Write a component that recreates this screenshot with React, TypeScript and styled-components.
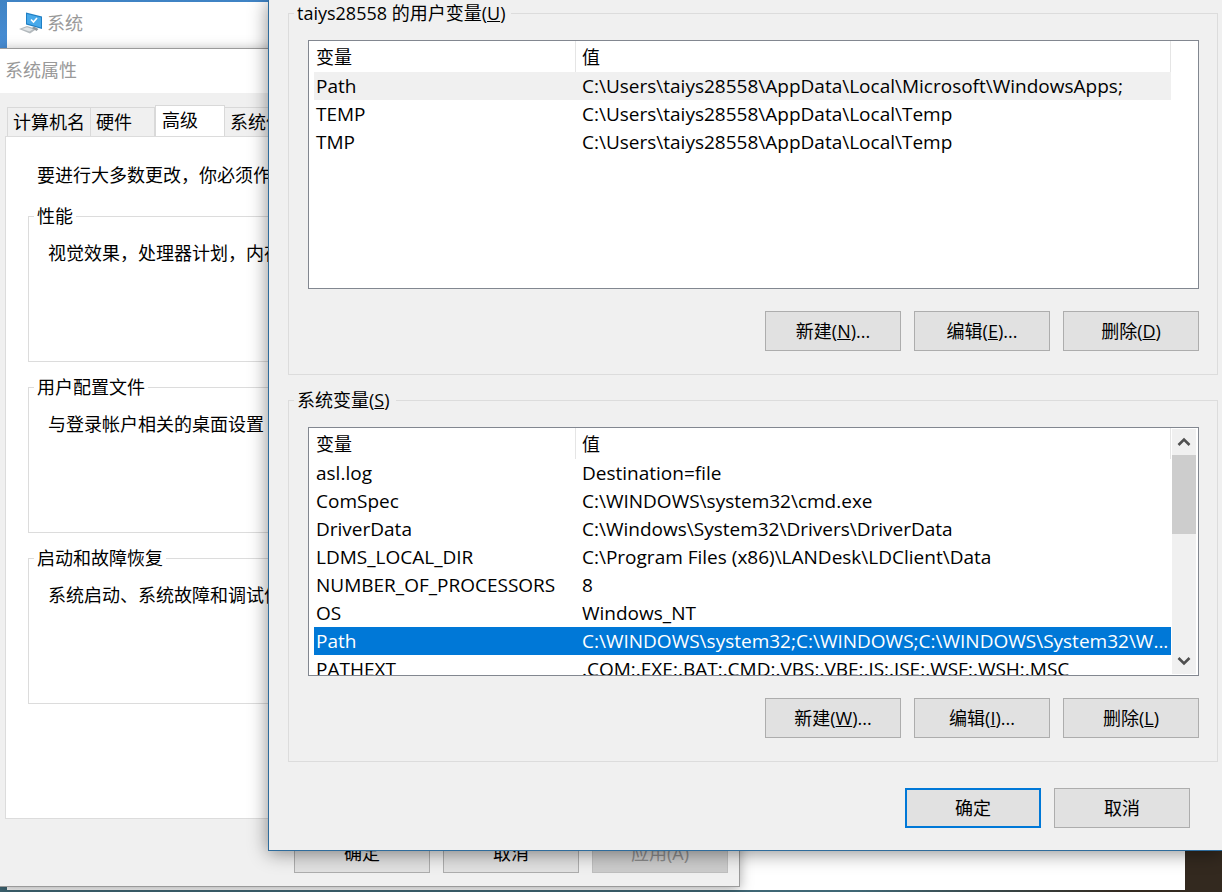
import React from 'react';
import styled, { createGlobalStyle, css } from 'styled-components';

const GlobalStyle = createGlobalStyle`
  *, *::before, *::after { box-sizing: border-box; }
  html, body { margin: 0; padding: 0; }
  body, button, table {
    font-family: 'Open Sans', 'Noto Sans CJK SC', sans-serif;
    font-size: 18px;
    line-height: 25px;
    font-weight: 400;
    color: #000;
  }
`;

const Desktop = styled.main`
  position: relative;
  min-height: 100vh;
  overflow: hidden;
  background: linear-gradient(90deg, transparent 70%, #33291f 92%), linear-gradient(180deg, #3f83c4 0, #4a90d9 60px, #3f6f80 300px, #3f6775 100%);
`;

const SystemWindow = styled.section`
  position: absolute;
  top: 2px;
  bottom: 2px;
  left: 7px;
  right: 37px;
  background: #fff;
`;

const SystemTitle = styled.header`
  display: flex;
  align-items: center;
  gap: 4px;
  height: 42px;
  padding-left: 12px;
  color: #999;
`;

const PropertiesWindow = styled.section`
  position: absolute;
  top: 48px;
  bottom: 5px;
  left: -1px;
  width: 741px;
  display: flex;
  flex-direction: column;
  background: #f0f0f0;
  border: 1px solid #9a9a9a;
  box-shadow: 0 2px 12px rgba(0, 0, 0, 0.35);
`;

const PropertiesTitle = styled.header`
  flex: none;
  height: 44px;
  padding: 9px 5px;
  background: #fff;
  color: #999;
`;

const TabBar = styled.div`
  display: flex;
  align-items: flex-end;
  height: 43px;
  flex: none;
  padding-left: 7px;
`;

const Tab = styled.button<{ $width: number; $active?: boolean }>`
  width: ${(p) => p.$width}px;
  height: ${(p) => (p.$active ? 31 : 29)}px;
  padding: ${(p) => (p.$active ? '0 6px 2px' : '1px 5px 0')};
  text-align: left;
  white-space: nowrap;
  background: ${(p) => (p.$active ? '#fff' : '#f0f0f0')};
  border: 1px solid #d9d9d9;
  border-left-width: ${(p) => (p.$active ? 1 : 0)}px;
  border-bottom: 0;
  &:first-child { border-left-width: 1px; }
`;

const TabPanel = styled.div`
  flex: 1;
  display: flex;
  flex-direction: column;
  gap: 13px;
  margin: 0 12px 0 5px;
  padding: 26px 22px;
  background: #fff;
  border: 1px solid #dcdcdc;
`;

const Note = styled.p`
  margin: 0 0 3px;
  padding-left: 9px;
`;

const groupFrame = css`
  min-width: 0;
  margin: 0;
  border: 1px solid #dcdcdc;
`;

const SettingsGroup = styled.fieldset`
  ${groupFrame}
  height: 158px;
  padding: 12px 19px;
`;

const SettingsLegend = styled.legend`
  margin-left: -14px;
  padding: 0 3px;
`;

const SettingsText = styled.p`
  margin: 0;
  white-space: nowrap;
`;

const Actions = styled.div`
  display: flex;
  justify-content: flex-end;
  gap: 13px;
`;

const PropertiesActions = styled(Actions)`
  padding: 14px 11px 13px;
`;

const PushButton = styled.button<{ $primary?: boolean }>`
  width: 136px;
  height: 40px;
  padding: 0;
  background: #e1e1e1;
  border: ${(p) => (p.$primary ? '2px solid #0078d7' : '1px solid #adadad')};
  &:disabled {
    color: #8a8a8a;
    background: #ccc;
    border-color: #bfbfbf;
  }
`;

const VariablesDialog = styled.section`
  position: absolute;
  top: 0;
  left: 268px;
  right: 0;
  padding: 1px 4px 22px 19px;
  background: #f0f0f0;
  border: solid #2f6c9c;
  border-width: 0 0 1px 1px;
  box-shadow: 0 2px 18px rgba(0, 0, 0, 0.45);
`;

const VariableGroup = styled.fieldset`
  ${groupFrame}
  padding: 14px 18px 23px 19px;
  margin-bottom: 13px;
`;

const VariableLegend = styled.legend`
  margin-left: -14px;
  padding: 0 6px 0 3px;
`;

const ListBox = styled.div`
  display: flex;
  height: 249px;
  margin-bottom: 22px;
  overflow: hidden;
  background: #fff;
  border: 1px solid #828790;
`;

const ListArea = styled.div`
  flex: 1;
  min-width: 0;
  padding: 0 0 0 5px;
`;

const VariableTable = styled.table`
  width: 100%;
  table-layout: fixed;
  border-collapse: separate;
  border-spacing: 0;
`;

const HeadCell = styled.th<{ $name?: boolean }>`
  width: ${(p) => (p.$name ? '262px' : 'auto')};
  height: 31px;
  padding: 3px 0 2px ${(p) => (p.$name ? 2 : 6)}px;
  text-align: left;
  font-weight: 400;
  border-right: 1px solid #e5e5e5;
`;

const Row = styled.tr<{ $state?: 'hover' | 'selected' }>`
  background: ${(p) => (p.$state === 'selected' ? '#0078d7' : p.$state === 'hover' ? '#f0f0f0' : '#fff')};
  color: ${(p) => (p.$state === 'selected' ? '#fff' : '#000')};
`;

const Cell = styled.td<{ $value?: boolean }>`
  height: 28px;
  padding: 2px 0 1px ${(p) => (p.$value ? 6 : 2)}px;
  font-size: 19px;
  white-space: nowrap;
  overflow: hidden;
`;

const ScrollGutter = styled.div`
  flex: none;
  display: flex;
  flex-direction: column;
  width: 27px;
  padding: 1px 2px 1px 1px;
`;

const ScrollTrack = styled.div`
  flex: 1;
  display: flex;
  flex-direction: column;
  justify-content: space-between;
  background: #f0f0f0;
`;

const ScrollButton = styled.button`
  display: flex;
  align-items: center;
  justify-content: center;
  height: 26px;
  padding: 0;
  border: 0;
  background: #f0f0f0;
`;

const ScrollThumb = styled.div`
  height: 79px;
  margin-bottom: auto;
  background: #cdcdcd;
`;

const DialogActions = styled(Actions)`
  padding: 13px 28px 0 0;
`;

function ComputerIcon() {
  return (
    <svg width="24" height="22" viewBox="0 0 24 22" aria-hidden="true">
      <path d="M7 0.5 L23 4.5 L23 17 L7 12.5 Z" fill="#1f7fc4" />
      <path d="M8 2 L22 5.5 L22 15.4 L8 11.6 Z" fill="#47a9ea" />
      <path d="M12 7.5 L14.5 10 L18 6" fill="none" stroke="#fff" strokeWidth="1.6" />
      <path d="M0 17 L8 14 L17.5 17 L11 21.5 Z" fill="#b3b9bd" />
      <path d="M3 17 L8 15.2 L14 17.2 L10.5 19.5 Z" fill="#dfe3e5" />
      <path d="M15 14.6 L19.5 17 L17.5 19 L13 16 Z" fill="#8d979e" />
    </svg>
  );
}

function Chevron({ up }: { up?: boolean }) {
  return (
    <svg width="14" height="10" viewBox="0 0 14 10" aria-hidden="true">
      <path
        d={up ? 'M1.5 8 L7 2.5 L12.5 8' : 'M1.5 2 L7 7.5 L12.5 2'}
        fill="none"
        stroke="#505050"
        strokeWidth="2.6"
      />
    </svg>
  );
}

type Variable = { name: string; value: string; state?: 'hover' | 'selected' };

const userVariables: Variable[] = [
  { name: 'Path', value: 'C:\\Users\\taiys28558\\AppData\\Local\\Microsoft\\WindowsApps;', state: 'hover' },
  { name: 'TEMP', value: 'C:\\Users\\taiys28558\\AppData\\Local\\Temp' },
  { name: 'TMP', value: 'C:\\Users\\taiys28558\\AppData\\Local\\Temp' },
];

const systemVariables: Variable[] = [
  { name: 'asl.log', value: 'Destination=file' },
  { name: 'ComSpec', value: 'C:\\WINDOWS\\system32\\cmd.exe' },
  { name: 'DriverData', value: 'C:\\Windows\\System32\\Drivers\\DriverData' },
  { name: 'LDMS_LOCAL_DIR', value: 'C:\\Program Files (x86)\\LANDesk\\LDClient\\Data' },
  { name: 'NUMBER_OF_PROCESSORS', value: '8' },
  { name: 'OS', value: 'Windows_NT' },
  { name: 'Path', value: 'C:\\WINDOWS\\system32;C:\\WINDOWS;C:\\WINDOWS\\System32\\W...', state: 'selected' },
  { name: 'PATHEXT', value: '.COM;.EXE;.BAT;.CMD;.VBS;.VBE;.JS;.JSE;.WSF;.WSH;.MSC' },
];

function VariableList({ items, scrollable }: { items: Variable[]; scrollable?: boolean }) {
  return (
    <ListBox>
      <ListArea>
        <VariableTable>
          <thead>
            <tr>
              <HeadCell $name scope="col">变量</HeadCell>
              <HeadCell scope="col">值</HeadCell>
            </tr>
          </thead>
          <tbody>
            {items.map((item) => (
              <Row key={item.name} $state={item.state}>
                <Cell>{item.name}</Cell>
                <Cell $value>{item.value}</Cell>
              </Row>
            ))}
          </tbody>
        </VariableTable>
      </ListArea>
      <ScrollGutter>
        {scrollable && (
          <ScrollTrack>
            <ScrollButton type="button" aria-label="向上滚动"><Chevron up /></ScrollButton>
            <ScrollThumb />
            <ScrollButton type="button" aria-label="向下滚动"><Chevron /></ScrollButton>
          </ScrollTrack>
        )}
      </ScrollGutter>
    </ListBox>
  );
}

const settings = [
  { title: '性能', text: '视觉效果，处理器计划，内存使用，以及虚拟内存' },
  { title: '用户配置文件', text: '与登录帐户相关的桌面设置' },
  { title: '启动和故障恢复', text: '系统启动、系统故障和调试信息' },
];

export default function App() {
  return (
    <>
      <GlobalStyle />
      <Desktop>
        <SystemWindow>
          <SystemTitle>
            <ComputerIcon />
            <span>系统</span>
          </SystemTitle>
        </SystemWindow>

        <PropertiesWindow>
          <PropertiesTitle>系统属性</PropertiesTitle>
          <TabBar role="tablist">
            <Tab type="button" role="tab" $width={84}>计算机名</Tab>
            <Tab type="button" role="tab" $width={64}>硬件</Tab>
            <Tab type="button" role="tab" aria-selected="true" $width={70} $active>高级</Tab>
            <Tab type="button" role="tab" $width={84}>系统保护</Tab>
          </TabBar>
          <TabPanel role="tabpanel">
            <Note>要进行大多数更改，你必须作为管理员登录。</Note>
            {settings.map((group) => (
              <SettingsGroup key={group.title}>
                <SettingsLegend>{group.title}</SettingsLegend>
                <SettingsText>{group.text}</SettingsText>
              </SettingsGroup>
            ))}
          </TabPanel>
          <PropertiesActions>
            <PushButton type="button">确定</PushButton>
            <PushButton type="button">取消</PushButton>
            <PushButton type="button" disabled>应用(A)</PushButton>
          </PropertiesActions>
        </PropertiesWindow>

        <VariablesDialog role="dialog" aria-label="环境变量">
          <VariableGroup>
            <VariableLegend>taiys28558 的用户变量(<u>U</u>)</VariableLegend>
            <VariableList items={userVariables} />
            <Actions>
              <PushButton type="button">新建(<u>N</u>)...</PushButton>
              <PushButton type="button">编辑(<u>E</u>)...</PushButton>
              <PushButton type="button">删除(<u>D</u>)</PushButton>
            </Actions>
          </VariableGroup>
          <VariableGroup>
            <VariableLegend>系统变量(<u>S</u>)</VariableLegend>
            <VariableList items={systemVariables} scrollable />
            <Actions>
              <PushButton type="button">新建(<u>W</u>)...</PushButton>
              <PushButton type="button">编辑(<u>I</u>)...</PushButton>
              <PushButton type="button">删除(<u>L</u>)</PushButton>
            </Actions>
          </VariableGroup>
          <DialogActions>
            <PushButton type="button" $primary>确定</PushButton>
            <PushButton type="button">取消</PushButton>
          </DialogActions>
        </VariablesDialog>
      </Desktop>
    </>
  );
}
